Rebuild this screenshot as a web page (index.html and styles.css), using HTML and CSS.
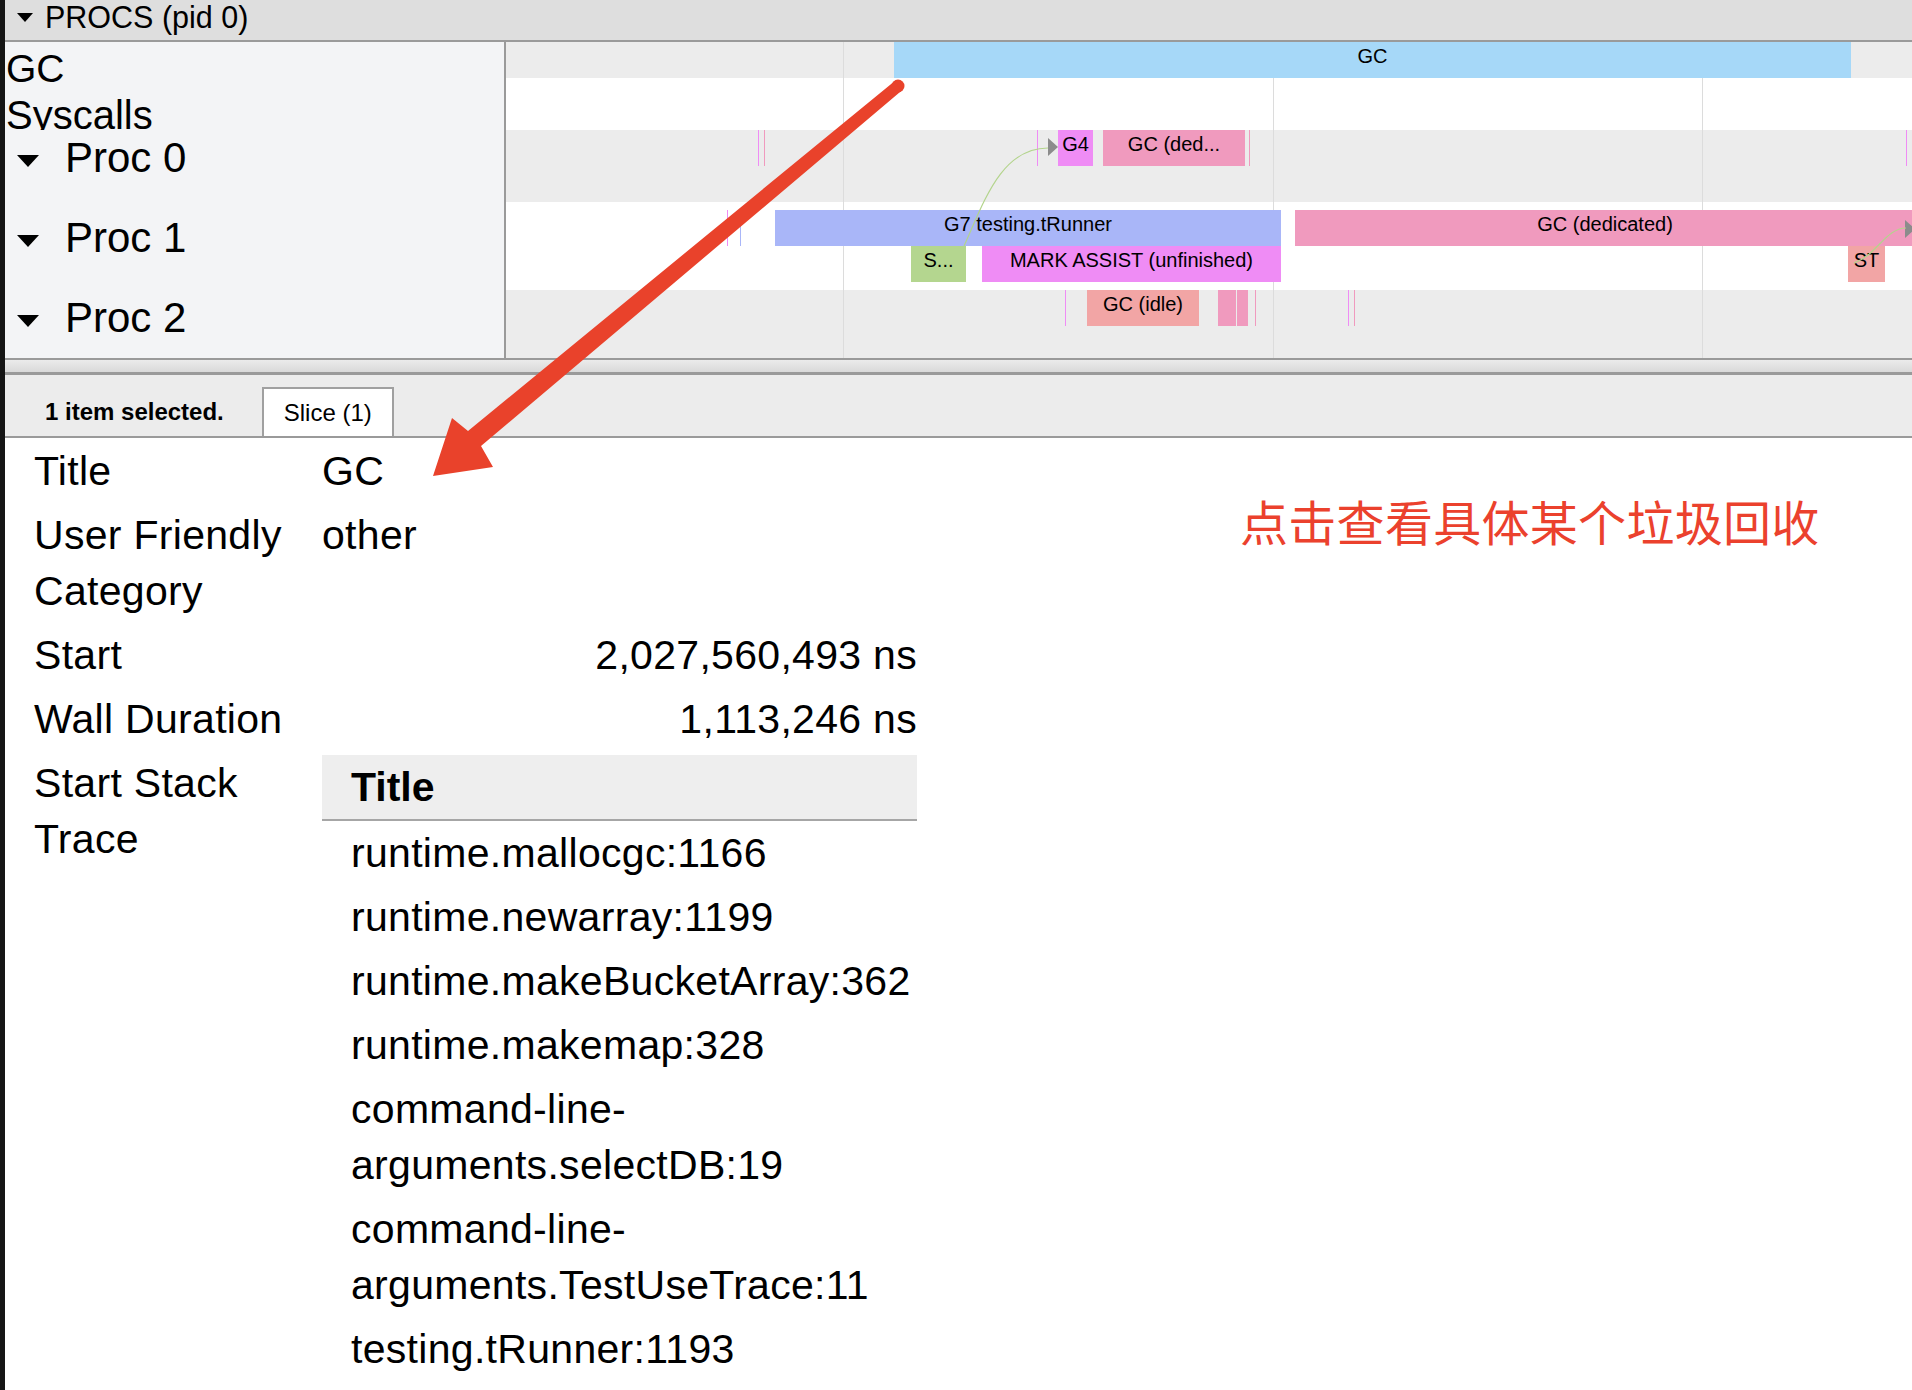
FILE: index.html
```html
<!DOCTYPE html>
<html lang="zh">
<head>
<meta charset="utf-8">
<title>Trace viewer</title>
<link rel="stylesheet" href="styles.css">
</head>
<body>
<div class="app">
  <div class="edge"></div>
  <div class="main">
    <div class="proc-header"><span class="tri tri-sm"></span><span>PROCS (pid 0)</span></div>
    <div class="tracks">
      <div class="labels">
        <div class="lbl lbl-gc">GC</div>
        <div class="lbl lbl-sys">Syscalls</div>
        <div class="lbl lbl-proc p0"><span class="tri tri-lg"></span><span>Proc 0</span></div>
        <div class="lbl lbl-proc p1"><span class="tri tri-lg"></span><span>Proc 1</span></div>
        <div class="lbl lbl-proc p2"><span class="tri tri-lg"></span><span>Proc 2</span></div>
      </div>
      <div class="timeline">
        <div class="vline" style="left:337px"></div>
        <div class="vline" style="left:767px"></div>
        <div class="vline" style="left:1196px"></div>

        <div class="trow row-gc">
          <div class="sl c-blue" style="left:388px;width:957px">GC</div>
        </div>
        <div class="trow row-sys"></div>
        <div class="trow row-p0">
          <div class="tk c-violet" style="left:252px"></div>
          <div class="tk c-pink" style="left:258px"></div>
          <div class="tk c-violet" style="left:531px"></div>
          <div class="flow-head" style="left:542px;top:8px"></div>
          <div class="sl c-violet" style="left:552px;width:35px">G4</div>
          <div class="sl c-pink" style="left:597px;width:142px">GC (ded...</div>
          <div class="tk c-pink" style="left:743px"></div>
          <div class="tk c-violet" style="left:1400px"></div>
        </div>
        <div class="trow row-p1">
          <div class="tk c-violet lvl1" style="left:221px"></div>
          <div class="tk c-peri lvl1" style="left:234px"></div>
          <div class="sl c-peri lvl1" style="left:269px;width:506px">G7 testing.tRunner</div>
          <div class="sl c-pink lvl1" style="left:789px;width:640px;text-indent:-20px">GC (dedicated)</div>
          <div class="flow-head" style="left:1399px;top:18px"></div>
          <div class="sl c-green lvl2" style="left:405px;width:55px">S...</div>
          <div class="sl c-violet lvl2" style="left:476px;width:299px">MARK ASSIST (unfinished)</div>
          <div class="sl c-salmon lvl2" style="left:1342px;width:37px">ST</div>
        </div>
        <div class="trow row-p2">
          <div class="tk c-violet" style="left:559px"></div>
          <div class="sl c-salmon" style="left:581px;width:112px">GC (idle)</div>
          <div class="sl c-pink" style="left:712px;width:18px"></div>
          <div class="sl c-pink" style="left:731px;width:11px"></div>
          <div class="tk c-pink" style="left:749px"></div>
          <div class="tk c-violet" style="left:842px"></div>
          <div class="tk c-pink" style="left:848px"></div>
        </div>

        <svg class="flows" width="1406" height="316" viewBox="0 0 1406 316">
          <path d="M458 204 C 478 160, 495 106, 542 106" />
          <path d="M1348 221 C 1370 214, 1380 186, 1400 186" />
        </svg>
      </div>
    </div>
    <div class="splitter"></div>
    <div class="tabbar">
      <div class="sel-label">1 item selected.</div>
      <div class="tab">Slice (1)</div>
    </div>
    <div class="details">
      <div class="dl">Title</div>
      <div class="dv">GC</div>
      <div class="dl">User Friendly Category</div>
      <div class="dv">other</div>
      <div class="dl">Start</div>
      <div class="dv num">2,027,560,493 ns</div>
      <div class="dl">Wall Duration</div>
      <div class="dv num">1,113,246 ns</div>
      <div class="dl">Start Stack Trace</div>
      <div class="dv trace">
        <div class="st-head">Title</div>
        <div class="st-row">runtime.mallocgc:1166</div>
        <div class="st-row">runtime.newarray:1199</div>
        <div class="st-row">runtime.makeBucketArray:362</div>
        <div class="st-row">runtime.makemap:328</div>
        <div class="st-row">command-line-arguments.selectDB:19</div>
        <div class="st-row">command-line-arguments.TestUseTrace:11</div>
        <div class="st-row">testing.tRunner:1193</div>
      </div>
    </div>
  </div>

  <svg class="annot" width="1912" height="1390" viewBox="0 0 1912 1390">
    <circle cx="898" cy="86" r="6.5" />
    <polygon points="894.2,81.4 468,431 452,418 433,476 493,467 481,446 901.8,90.6" />
  </svg>
  <div class="note">点击查看具体某个垃圾回收</div>
</div>
</body>
</html>
```

FILE: styles.css
```css
html, body {
  margin: 0;
  padding: 0;
}

body {
  font-family: "Liberation Sans", Arial, "Noto Sans CJK SC", sans-serif;
  color: #000;
  background: #fff;
}

.app {
  position: relative;
  width: 1912px;
  height: 1390px;
  display: flex;
  overflow: hidden;
  background: #fff;
}

.edge {
  width: 5px;
  flex: none;
  background: #151515;
}

.main {
  flex: 1;
  min-width: 0;
  display: flex;
  flex-direction: column;
}

/* ---------- process header ---------- */
.proc-header {
  flex: none;
  box-sizing: border-box;
  height: 42px;
  border-bottom: 2px solid #9a9a9a;
  background: #dedede;
  display: flex;
  align-items: flex-start;
  gap: 12px;
  padding-left: 12px;
  font-size: 30.5px;
  line-height: 34px;
  white-space: nowrap;
}

.tri {
  display: block;
  width: 0;
  height: 0;
  flex: none;
}

.tri-sm {
  border-left: 8px solid transparent;
  border-right: 8px solid transparent;
  border-top: 9px solid #000;
  margin-top: 13px;
}

.tri-lg {
  border-left: 11.5px solid transparent;
  border-right: 11.5px solid transparent;
  border-top: 12px solid #000;
  margin-top: 20px;
}

/* ---------- tracks ---------- */
.tracks {
  height: 316px;
  flex: none;
  display: flex;
  border-bottom: 2px solid #9a9a9a;
}

.labels {
  width: 499px;
  flex: none;
  background: #f3f4f6;
  border-right: 2px solid #9a9a9a;
  display: flex;
  flex-direction: column;
}

.lbl {
  box-sizing: border-box;
  white-space: nowrap;
  flex: none;
}

.lbl-gc {
  height: 48px;
  padding: 6px 0 0 1px;
  font-size: 39px;
  line-height: 42px;
}

.lbl-sys {
  height: 40px;
  padding: 5px 0 0 1px;
  font-size: 40px;
  line-height: 40px;
  overflow: hidden;
}

.lbl-proc {
  display: flex;
  align-items: flex-start;
  gap: 26px;
  padding-left: 12px;
  font-size: 42px;
  line-height: 45px;
}

.lbl-proc.p0 { height: 72px; padding-top: 5px; }
.lbl-proc.p1 { height: 88px; padding-top: 13px; }
.lbl-proc.p2 { height: 68px; padding-top: 5px; }

.timeline {
  flex: 1;
  min-width: 0;
  position: relative;
  overflow: hidden;
  display: flex;
  flex-direction: column;
}

.trow {
  position: relative;
  flex: none;
}

.row-gc  { height: 36px; background: #ececec; }
.row-sys { height: 52px; background: #ffffff; }
.row-p0  { height: 72px; background: #ececec; }
.row-p1  { height: 88px; background: #ffffff; }
.row-p2  { height: 68px; background: #ececec; }

.vline {
  position: absolute;
  top: 0;
  bottom: 0;
  width: 1px;
  background: #dcdcdc;
  z-index: 1;
}

.sl {
  position: absolute;
  top: 0;
  height: 36px;
  line-height: 29px;
  font-size: 20px;
  text-align: center;
  white-space: nowrap;
  overflow: hidden;
  z-index: 2;
}

.tk {
  position: absolute;
  top: 0;
  width: 1px;
  height: 36px;
  z-index: 2;
}

.lvl1 { top: 8px; }
.lvl2 { top: 44px; }

.c-blue   { background: #a6d8f8; }
.c-peri   { background: #a9b6f8; }
.c-pink   { background: #f09abe; }
.c-violet { background: #ef8cf5; }
.c-green  { background: #b4d68f; }
.c-salmon { background: #f2a5a5; }

.flow-head {
  position: absolute;
  width: 0;
  height: 0;
  border-top: 9px solid transparent;
  border-bottom: 9px solid transparent;
  border-left: 10px solid #8c8c8c;
  z-index: 3;
}

.flows {
  position: absolute;
  left: 0;
  top: 0;
  z-index: 3;
  fill: none;
  stroke: #b3d48c;
  stroke-width: 1.2;
}

/* ---------- splitter + tabs ---------- */
.splitter {
  height: 12px;
  flex: none;
  background: linear-gradient(#ebebeb, #d9d9d9);
  border-bottom: 3px solid #9a9a9a;
}

.tabbar {
  height: 49px;
  flex: none;
  padding: 12px 0 0 40px;
  background: #ececec;
  border-bottom: 2px solid #9a9a9a;
  display: flex;
  align-items: stretch;
  white-space: nowrap;
}

.sel-label {
  font-size: 24px;
  font-weight: bold;
  line-height: 49px;
  margin-right: 38px;
}

.tab {
  background: #fff;
  border: 2px solid #a0a0a0;
  border-bottom: none;
  padding: 0 20px;
  font-size: 24px;
  line-height: 47px;
}

/* ---------- details ---------- */
.details {
  padding: 1px 0 0 29px;
  display: grid;
  grid-template-columns: 288px 595px;
  align-items: start;
  font-size: 41px;
  letter-spacing: 0.3px;
  line-height: 56px;
}

.dl, .dv {
  padding: 4px 0;
}

.dv.num {
  text-align: right;
  white-space: nowrap;
}

.dv.trace {
  padding-bottom: 0;
}

.st-head {
  background: #eeeeee;
  border-bottom: 2px solid #a6a6a6;
  padding: 4px 0 4px 29px;
  font-weight: bold;
  letter-spacing: 0;
}

.st-row {
  padding: 4px 0 4px 29px;
}

/* ---------- annotation overlay ---------- */
.annot {
  position: absolute;
  left: 0;
  top: 0;
  z-index: 10;
  pointer-events: none;
  fill: #e9422b;
}

.note {
  position: absolute;
  left: 1240px;
  top: 496px;
  z-index: 10;
  font-family: "Noto Sans CJK SC", "Noto Sans CJK JP", sans-serif;
  font-size: 48px;
  line-height: 48px;
  letter-spacing: 0.3px;
  color: #eb412d;
  white-space: nowrap;
}
```
